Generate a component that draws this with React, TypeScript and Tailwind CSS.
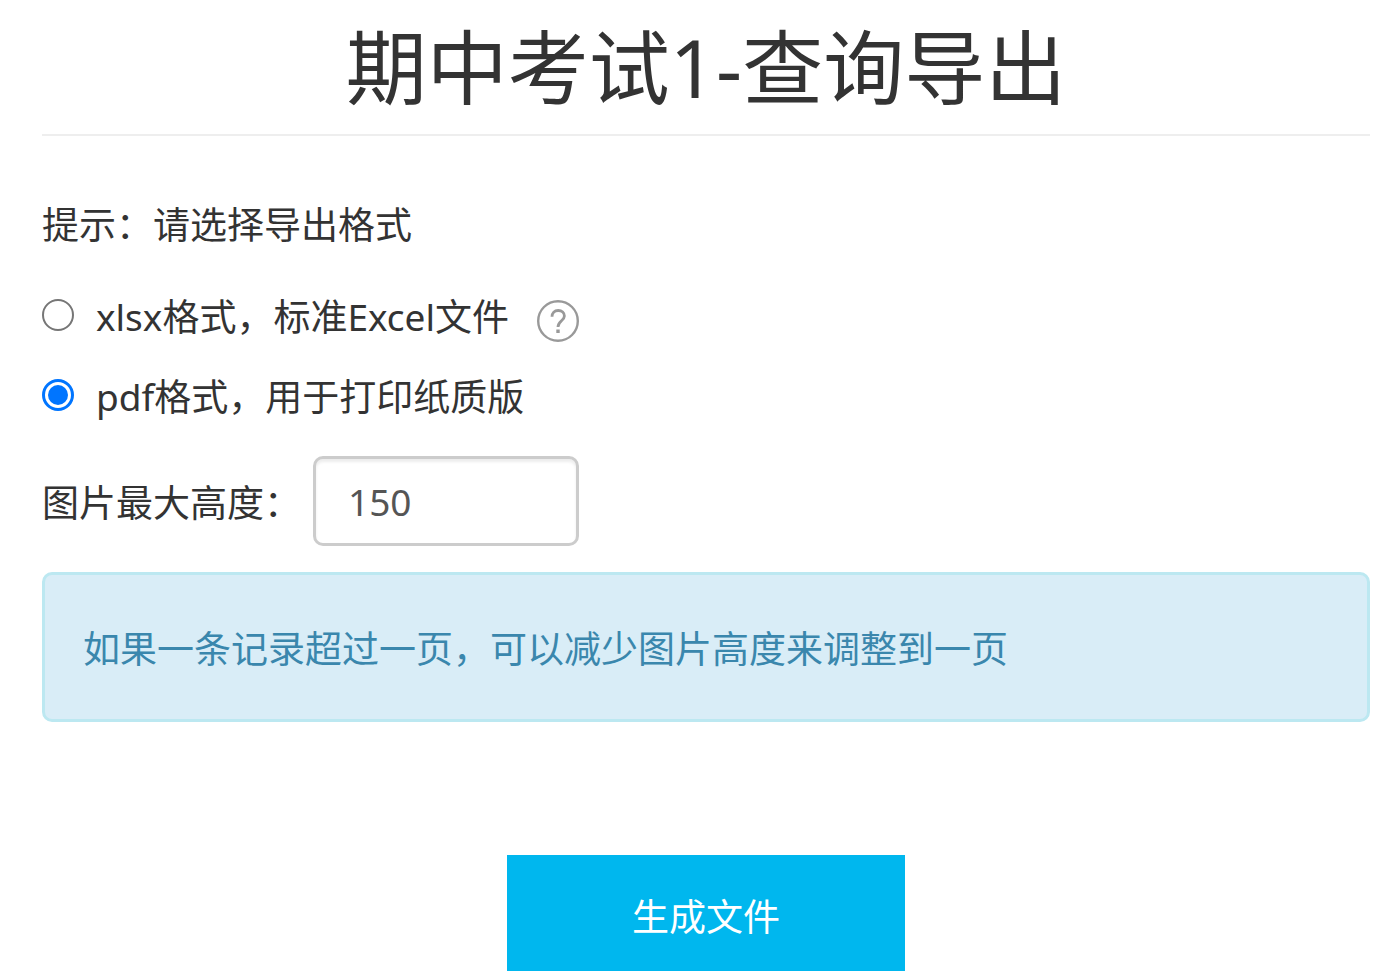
import React, { useState } from 'react';

type Format = 'xlsx' | 'pdf';

interface FormatOptionProps {
  value: Format;
  label: string;
  checked: boolean;
  onSelect: (value: Format) => void;
  children?: React.ReactNode;
}

const FormatOption: React.FC<FormatOptionProps> = ({ value, label, checked, onSelect, children }) => {
  return (
    <div className="flex h-20 items-center">
      <input
        type="radio"
        id={value}
        name="format"
        value={value}
        checked={checked}
        onChange={() => onSelect(value)}
        className="mb-1 size-8 shrink-0 appearance-none rounded-full border-2 border-[#767676] bg-white bg-clip-content p-1 checked:border-3 checked:border-[#0075ff] checked:p-[3px] checked:bg-[#0075ff]"
      />
      <label htmlFor={value} className="ml-[22px]">
        {label}
      </label>
      {children}
    </div>
  );
};

const HelpIcon: React.FC = () => {
  return (
    <svg viewBox="0 0 42 42" className="size-[42px]" fill="none" stroke="#999" strokeWidth="2.4">
      <circle cx="21" cy="21" r="19.8" />
      <path d="M15 16.800c0-4 2.500-6.300 6.200-6.300s6.200 2.200 6.200 5.600c0 4.600-6.400 5-6.400 11" strokeWidth="2.800" />
      <path d="M21 29.500v3.500" strokeWidth="3.400" />
    </svg>
  );
};

export default function App() {
  const [format, setFormat] = useState<Format>('pdf');
  const [height, setHeight] = useState('150');

  return (
    <main className="pr-7 pl-[42px] font-['Noto_Sans','Noto_Sans_CJK_SC',sans-serif] text-[37px] leading-[56px] text-[#333]">
      {/* 标题 */}
      <h1 className="border-b-2 border-[#eee] pt-4 pb-4 text-center text-[81px] leading-[102px]">
        期中考试1-查询导出
      </h1>

      <form onSubmit={(e) => e.preventDefault()}>
        <p className="mt-[61px] mb-6">提示：请选择导出格式</p>

        {/* 导出格式 */}
        <FormatOption
          value="xlsx"
          label="xlsx格式，标准Excel文件"
          checked={format === 'xlsx'}
          onSelect={setFormat}
        >
          <button type="button" aria-label="帮助" className="mt-2 ml-7">
            <HelpIcon />
          </button>
        </FormatOption>
        <FormatOption
          value="pdf"
          label="pdf格式，用于打印纸质版"
          checked={format === 'pdf'}
          onSelect={setFormat}
        />

        <div className="mt-[19px] flex items-center">
          <label htmlFor="height" className="pt-1">图片最大高度：</label>
          <input
            id="height"
            type="text"
            value={height}
            onChange={(e) => setHeight(e.target.value)}
            className="ml-3 h-[90px] w-[266px] rounded-[10px] border-[3px] border-[#ccc] px-8 text-[#555] shadow-[inset_0_3px_3px_rgba(0,0,0,0.075)]"
          />
        </div>

        <div className="mt-[26px] rounded-[10px] border-[3px] border-[#bce8f1] bg-[#d9edf7] px-[38px] pt-[46px] pb-[42px] text-[#3a87ad]">
          如果一条记录超过一页，可以减少图片高度来调整到一页
        </div>

        <button
          type="submit"
          className="mx-auto mt-[133px] block h-[124px] w-[30%] bg-[#00b7ee] text-white"
        >
          生成文件
        </button>
      </form>
    </main>
  );
}
